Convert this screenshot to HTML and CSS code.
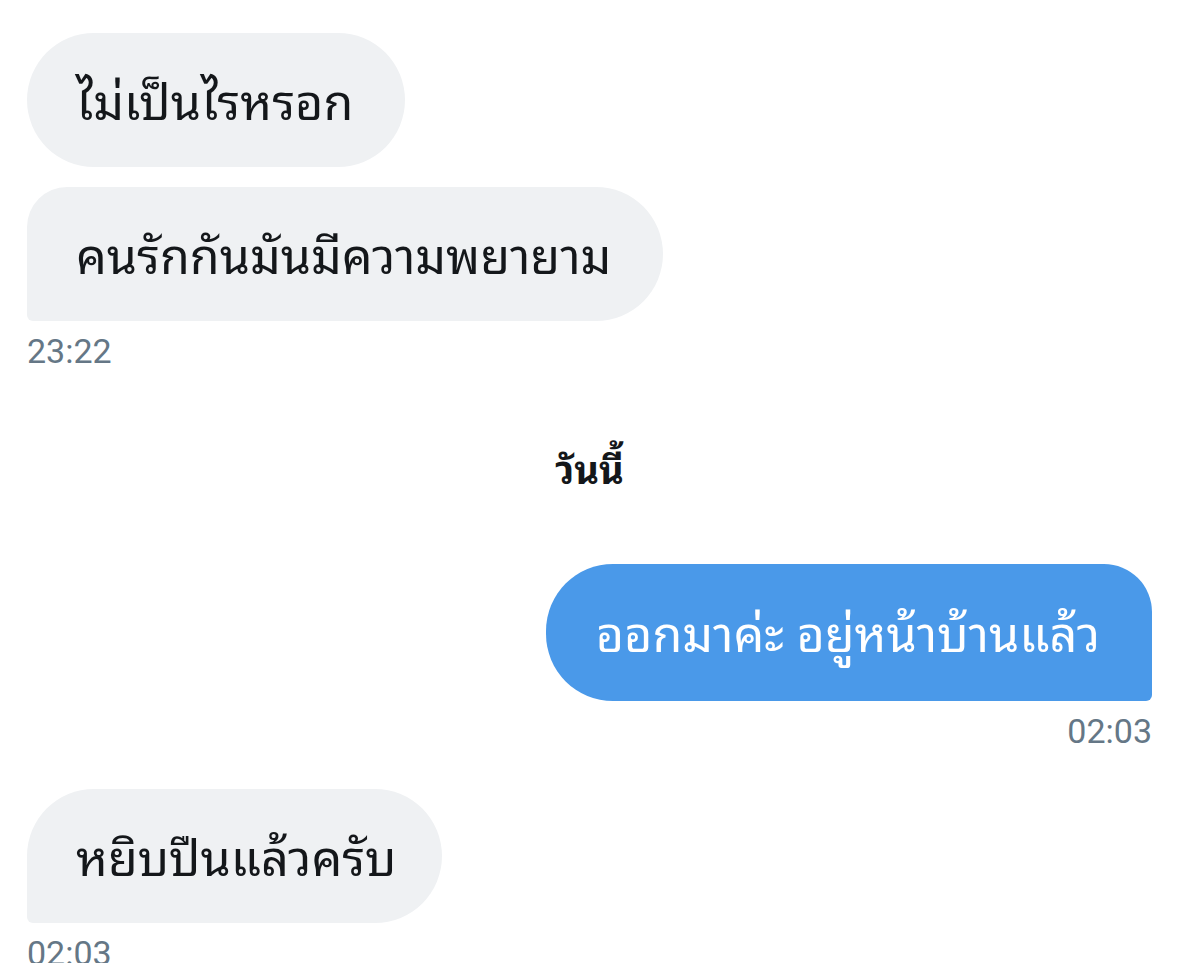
FILE: index.html
```html
<!DOCTYPE html>
<html lang="th">
<head>
<meta charset="utf-8">
<title>Messages</title>
<link rel="stylesheet" href="styles.css">
</head>
<body>
<main class="chat">
  <div class="msg in">
    <div class="bubble in-first">ไม่เป็นไรหรอก</div>
  </div>
  <div class="msg in gap-s">
    <div class="bubble in-last">คนรักกันมันมีความพยายาม</div>
    <div class="time">23:22</div>
  </div>
  <div class="day">วันนี้</div>
  <div class="msg out">
    <div class="bubble out-last">ออกมาค่ะ อยู่หน้าบ้านแล้ว</div>
    <div class="time">02:03</div>
  </div>
  <div class="msg in gap-l">
    <div class="bubble in-single">หยิบปืนแล้วครับ</div>
    <div class="time">02:03</div>
  </div>
</main>
</body>
</html>
```

FILE: styles.css
```css
html, body {
  margin: 0;
  padding: 0;
  background: #ffffff;
}

body {
  font-family: "Noto Sans Thai Looped", "Noto Looped Thai", "Loma", "Garuda", "Norasi", "Noto Sans Thai", "Noto Sans", sans-serif;
  color: #14171a;
  overflow: hidden;
  height: 963px;
}

.chat {
  display: flex;
  flex-direction: column;
  padding: 33px 27px 0 27px;
}

.msg {
  display: flex;
  flex-direction: column;
}

.msg.in { align-items: flex-start; }
.msg.out { align-items: flex-end; }

.gap-s { margin-top: 20px; }
.gap-l { margin-top: 38px; }

.bubble {
  display: flex;
  align-items: center;
  height: 134px;
  box-sizing: border-box;
  padding: 0 52px 5px 49px;
  font-size: 48.5px;
  white-space: nowrap;
  background: #eff1f3;
  color: #14171a;
}

.in-first { border-radius: 67px; }
.in-last { border-radius: 40px 67px 67px 6px; }
.in-single {
  padding-right: 46px;
  border-radius: 67px 67px 67px 6px;
}

.out-last {
  background: #4a99e9;
  color: #ffffff;
  height: 137px;
  padding: 0 52px 5px 50px;
  border-radius: 67px 48px 6px 67px;
}

.time {
  font-family: Roboto, "Liberation Sans", sans-serif;
  font-size: 34px;
  line-height: 40px;
  color: #657786;
  margin-top: 10px;
}

.day {
  align-self: center;
  font-size: 38px;
  font-weight: 700;
  margin: 65px 0 67px 0;
  color: #14171a;
}
```
